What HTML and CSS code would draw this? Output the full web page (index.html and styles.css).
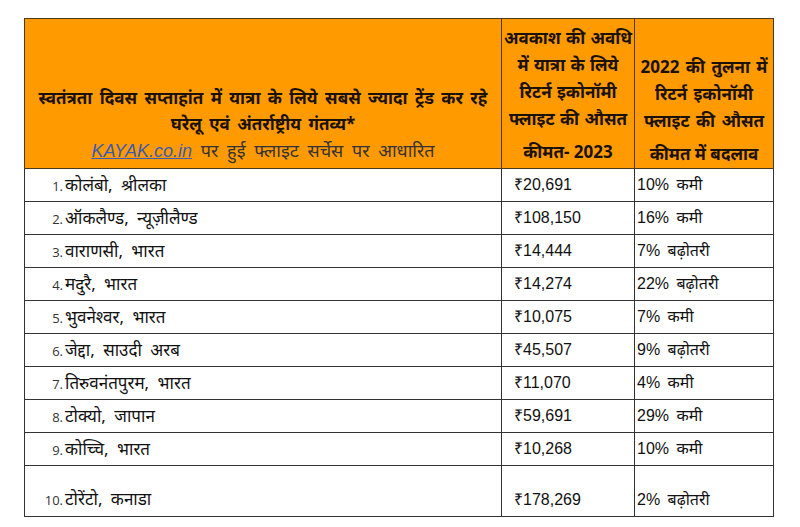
FILE: index.html
```html
<!DOCTYPE html>
<html lang="hi">
<head>
<meta charset="utf-8">
<title>KAYAK</title>
<link rel="stylesheet" href="styles.css">
</head>
<body>
<table class="grid">
  <colgroup>
    <col class="c1"><col class="c2"><col class="c3">
  </colgroup>
  <thead>
    <tr class="head">
      <th class="h1">
        <div class="title">स्वतंत्रता दिवस सप्ताहांत में यात्रा के लिये सबसे ज्यादा ट्रेंड कर रहे<br>घरेलू एवं अंतर्राष्ट्रीय गंतव्य*</div>
        <div class="source"><span class="link">KAYAK.co.in</span> पर हुई फ्लाइट सर्चेस पर आधारित</div>
      </th>
      <th class="h2">
        <div class="lines">अवकाश की अवधि<br>में यात्रा के लिये<br>रिटर्न इकोनॉमी<br>फ्लाइट की औसत</div>
        <div class="last">कीमत- 2023</div>
      </th>
      <th class="h3">
        <div class="lines">2022 की तुलना में<br>रिटर्न इकोनॉमी<br>फ्लाइट की औसत</div>
        <div class="last">कीमत में बदलाव</div>
      </th>
    </tr>
  </thead>
  <tbody>
    <tr><td class="dest"><span class="num">1.</span>कोलंबो, श्रीलका</td><td class="price">₹20,691</td><td class="chg">10% कमी</td></tr>
    <tr><td class="dest"><span class="num">2.</span>ऑकलैण्ड, न्यूज़ीलैण्ड</td><td class="price">₹108,150</td><td class="chg">16% कमी</td></tr>
    <tr><td class="dest"><span class="num">3.</span>वाराणसी, भारत</td><td class="price">₹14,444</td><td class="chg">7% बढ़ोतरी</td></tr>
    <tr><td class="dest"><span class="num">4.</span>मदुरै, भारत</td><td class="price">₹14,274</td><td class="chg">22% बढ़ोतरी</td></tr>
    <tr><td class="dest"><span class="num">5.</span>भुवनेश्वर, भारत</td><td class="price">₹10,075</td><td class="chg">7% कमी</td></tr>
    <tr><td class="dest"><span class="num">6.</span>जेद्दा, साउदी अरब</td><td class="price">₹45,507</td><td class="chg">9% बढ़ोतरी</td></tr>
    <tr><td class="dest"><span class="num">7.</span>तिरुवनंतपुरम, भारत</td><td class="price">₹11,070</td><td class="chg">4% कमी</td></tr>
    <tr><td class="dest"><span class="num">8.</span>टोक्यो, जापान</td><td class="price">₹59,691</td><td class="chg">29% कमी</td></tr>
    <tr><td class="dest"><span class="num">9.</span>कोच्चि, भारत</td><td class="price">₹10,268</td><td class="chg">10% कमी</td></tr>
    <tr class="tall"><td class="dest"><span class="num">10.</span>टोरेंटो, कनाडा</td><td class="price">₹178,269</td><td class="chg">2% बढ़ोतरी</td></tr>
  </tbody>
</table>
</body>
</html>
```

FILE: styles.css
```css
html, body {
  margin: 0;
  padding: 0;
  background: #ffffff;
}

body {
  padding: 18px 0 0 24px;
  font-family: "Noto Sans", "Noto Sans Devanagari", "Liberation Sans", sans-serif;
  color: #111;
}

.grid {
  border-collapse: collapse;
  width: 749px;
  table-layout: fixed;
}

.c1 { width: 477px; }
.c2 { width: 133px; }
.c3 { width: 139px; }

.head th {
  background: #ff9a00;
  border: 1px solid #4d3a1c;
  height: 145px;
  padding: 0;
  font-weight: bold;
  font-size: 17px;
  color: #1a1208;
  text-align: center;
}

.h1 {
  vertical-align: bottom;
  padding-bottom: 4px !important;
}

.title {
  line-height: 26px;
  word-spacing: 3px;
}

.source {
  line-height: 26px;
  font-size: 18px;
  font-weight: normal;
  font-style: italic;
  color: #333;
  word-spacing: 4px;
}

.link {
  font-family: "Liberation Sans", sans-serif;
  font-size: 18px;
  color: #3b5bb5;
  text-decoration: underline;
  word-spacing: 0;
}

.h2 {
  vertical-align: top;
}

.h3 {
  vertical-align: bottom;
}

.lines {
  line-height: 27px;
  padding-top: 5px;
  word-spacing: 1px;
}

.h3 .lines {
  word-spacing: 2px;
}

.last {
  line-height: 27px;
  padding-top: 6px;
  padding-bottom: 1px;
}

tbody td {
  border: 1px solid #333;
  height: 32px;
  padding: 0;
  font-size: 17px;
  vertical-align: middle;
  line-height: 20px;
}

tbody tr.tall td {
  height: 44px;
  vertical-align: bottom;
  padding-bottom: 6px;
}

.dest {
  padding-left: 0 !important;
  word-spacing: 4px;
}

.num {
  display: inline-block;
  width: 38px;
  text-align: right;
  padding-right: 2px;
  font-family: "Open Sans", sans-serif;
  font-size: 13px;
  color: #333;
  word-spacing: 0;
}

.price {
  padding-left: 12px !important;
  font-family: "Liberation Sans", sans-serif;
  font-size: 16px;
}

.chg {
  padding-left: 2px !important;
  font-family: "Liberation Sans", "Noto Sans", sans-serif;
  font-size: 16px;
  word-spacing: 3px;
}
```
